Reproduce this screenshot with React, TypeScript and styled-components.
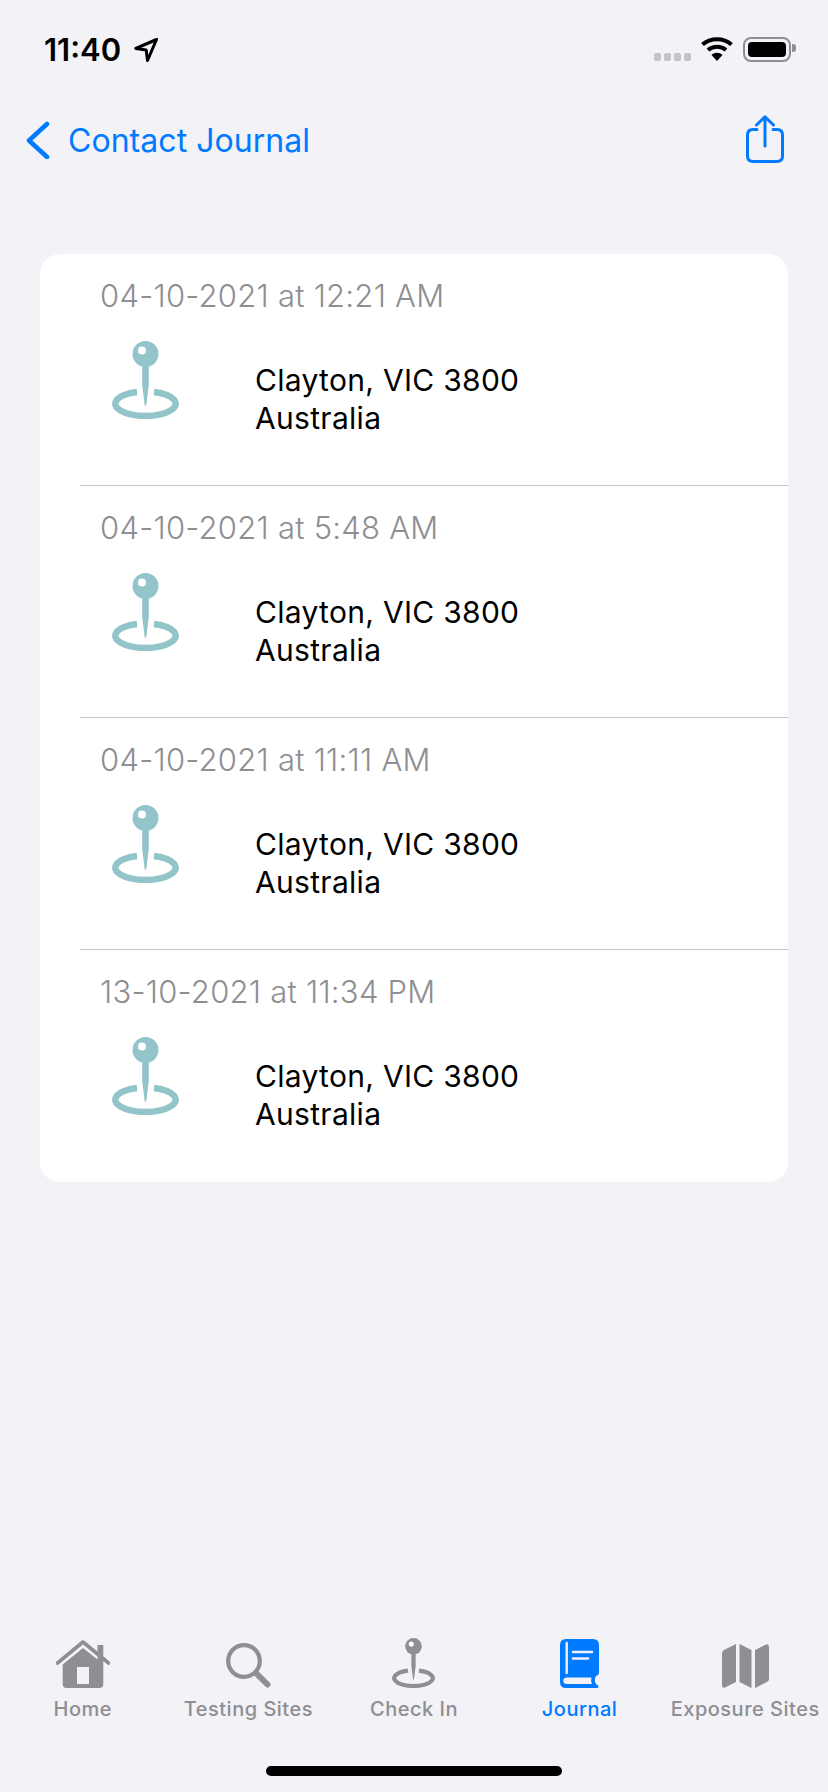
import React from 'react';
import styled, { createGlobalStyle } from 'styled-components';

const BLUE = '#007aff';
const GRAY = '#8e8e93';

const entries = ['04-10-2021 at 12:21 AM', '04-10-2021 at 5:48 AM', '04-10-2021 at 11:11 AM', '13-10-2021 at 11:34 PM'];

function PinIcon({ color, width, height }: { color: string; width: number; height: number }) {
  return (
    <svg width={width} height={height} viewBox="0 0 67 78">
      <circle cx="33.5" cy="13" r="13" fill={color} />
      <circle cx="30" cy="9.5" r="4" fill="#fff" />
      <path d="M30.2 24H36.8V44L34.3 64Q33.5 66 32.7 64L30.2 44Z" fill={color} />
      <path d="M25 51A30.2 12.2 0 1 0 42 51" fill="none" stroke={color} strokeWidth="6.5" />
    </svg>
  );
}

function HomeIcon() {
  return (
    <svg width="54" height="48" viewBox="0 0 54 48">
      <path d="M1.500 23L27 2L52.500 23" fill="none" stroke={GRAY} strokeWidth="3.600" strokeLinecap="round" strokeLinejoin="round" />
      <path
        fillRule="evenodd"
        d="M27 8L41.500 19.500V5H47.300V24.500V44Q47.300 48 43.300 48H10.700Q6.700 48 6.700 44V24.500ZM21 27V44H33V27Z"
        fill={GRAY}
      />
    </svg>
  );
}

function SearchIcon() {
  return (
    <svg width="45" height="45" viewBox="0 0 45 45">
      <circle cx="18" cy="18" r="15.800" fill="none" stroke={GRAY} strokeWidth="4.200" />
      <path d="M30 30L41.500 41.500" stroke={GRAY} strokeWidth="6" strokeLinecap="round" />
    </svg>
  );
}

function BookIcon() {
  return (
    <svg width="39" height="49" viewBox="0 0 39 49">
      <path
        d="M6 0H33Q39 0 39 6V33Q39 36 36 37Q33.500 41 36 45L38.500 47Q39 49 37 49H6Q0 49 0 43V6Q0 0 6 0Z"
        fill={BLUE}
      />
      <path d="M6.700 4V34" stroke="#f2f2f7" strokeWidth="2.400" strokeLinecap="round" />
      <path d="M13 13H32M13 19.500H28" stroke="#f2f2f7" strokeWidth="2.600" strokeLinecap="round" />
      <path d="M7 38.500H31.500Q30.500 41.700 32 45H7Q3.300 45 3.300 41.700Q3.300 38.500 7 38.500Z" fill="#f2f2f7" />
    </svg>
  );
}

function MapIcon() {
  return (
    <svg width="47" height="44" viewBox="0 0 47 44">
      <path d="M0 9Q0 7 2 6L14 0V38L3 43.500Q0 44.500 0 41Z" fill={GRAY} />
      <path d="M17.500 0L29.500 6V44L17.500 38Z" fill={GRAY} />
      <path d="M47 35Q47 37 45 38L33 44V6L44 .5Q47 -.5 47 3Z" fill={GRAY} />
    </svg>
  );
}

const tabs = [
  { label: 'Home', icon: <HomeIcon /> },
  { label: 'Testing Sites', icon: <SearchIcon /> },
  { label: 'Check In', icon: <PinIcon color={GRAY} width={45} height={50} /> },
  { label: 'Journal', icon: <BookIcon />, active: true },
  { label: 'Exposure Sites', icon: <MapIcon /> },
];

export default function App() {
  return (
    <Page>
      <GlobalStyle />
      <StatusBar>
        <Clock>
          <Time>11:40</Time>
          <svg width="24" height="24" viewBox="0 0 24 24">
            <path d="M22.500 1.500L1.800 10.500L12.200 12L13.500 22.500Z" fill="none" stroke="#000" strokeWidth="3" strokeLinejoin="round" />
          </svg>
        </Clock>
        <StatusIcons>
          <Signal>
            <Dot />
            <Dot />
            <Dot />
            <Dot />
          </Signal>
          <svg width="32" height="24" viewBox="0 0 32 24">
            <path d="M1.500 7.500C9.500 .5 22.500 .5 30.500 7.500" fill="none" stroke="#000" strokeWidth="4" />
            <path d="M7 13C12 8.700 20 8.700 25 13" fill="none" stroke="#000" strokeWidth="4" />
            <path d="M10.500 18C13.500 15 18.500 15 21.500 18L16 24Z" fill="#000" />
          </svg>
          <Battery>
            <BatteryFill />
            <BatteryCap />
          </Battery>
        </StatusIcons>
      </StatusBar>

      <NavBar>
        <BackLink>
          <svg width="24" height="38" viewBox="0 0 24 38">
            <path d="M21 3L3 19.500L21 36" fill="none" stroke={BLUE} strokeWidth="4.500" strokeLinecap="round" strokeLinejoin="round" />
          </svg>
          <NavTitle>Contact Journal</NavTitle>
        </BackLink>
        <svg width="38" height="48" viewBox="0 0 38 48">
          <path d="M11 14.500H7Q1.500 14.500 1.500 20V41Q1.500 46.500 7 46.500H31Q36.500 46.500 36.500 41V20Q36.500 14.500 31 14.500H27" fill="none" stroke={BLUE} strokeWidth="3" strokeLinecap="round" />
          <path d="M19 2V31M10.500 10L19 1.800L27.500 10" fill="none" stroke={BLUE} strokeWidth="3" strokeLinecap="round" strokeLinejoin="round" />
        </svg>
      </NavBar>

      <Card>
        {entries.map(date => (
          <Row key={date}>
            <DateLine>{date}</DateLine>
            <RowBody>
              <PinIcon color="#93c4c9" width={67} height={78} />
              <Address>
                Clayton, VIC 3800
                <br />
                Australia
              </Address>
            </RowBody>
          </Row>
        ))}
      </Card>

      <TabBar>
        {tabs.map(tab => (
          <Tab key={tab.label}>
            <TabIcon>{tab.icon}</TabIcon>
            <TabLabel $active={tab.active}>{tab.label}</TabLabel>
          </Tab>
        ))}
      </TabBar>
      <HomeIndicator />
    </Page>
  );
}

const GlobalStyle = createGlobalStyle`
  html, body {
    margin: 0;
    padding: 0;
    background: #f2f2f7;
  }
  * {
    box-sizing: border-box;
  }
`;

const Page = styled.div`
  width: 828px;
  height: 1792px;
  display: flex;
  flex-direction: column;
  overflow: hidden;
  background: #f2f2f7;
  font-family: 'Inter', 'Liberation Sans', sans-serif;
`;

const StatusBar = styled.div`
  height: 100px;
  padding: 37px 34px 0 44px;
  display: flex;
  justify-content: space-between;
  align-items: flex-start;
`;

const Clock = styled.div`
  display: flex;
  align-items: center;
  gap: 13px;
  height: 25px;
`;

const Time = styled.span`
  font-size: 31px;
  font-weight: 600;
  color: #000;
`;

const StatusIcons = styled.div`
  display: flex;
  align-items: flex-start;
`;

const Signal = styled.div`
  display: flex;
  gap: 3px;
  margin: 16px 10px 0 0;
`;

const Dot = styled.span`
  width: 7px;
  height: 8px;
  border-radius: 2px;
  background: #c4c4c8;
`;

const Battery = styled.div`
  position: relative;
  width: 48px;
  height: 25px;
  margin: 0 3px 0 10px;
  padding: 3px;
  border: 2px solid #8e8e93;
  border-radius: 8px;
`;

const BatteryFill = styled.div`
  height: 100%;
  border-radius: 4px;
  background: #000;
`;

const BatteryCap = styled.div`
  position: absolute;
  right: -7px;
  top: 5px;
  width: 4px;
  height: 8px;
  border-radius: 0 3px 3px 0;
  background: #8e8e93;
`;

const NavBar = styled.div`
  height: 64px;
  margin-top: 15px;
  padding: 0 44px 0 26px;
  display: flex;
  justify-content: space-between;
  align-items: flex-start;
`;

const BackLink = styled.div`
  display: flex;
  align-items: center;
  gap: 18px;
  height: 50px;
`;

const NavTitle = styled.span`
  font-size: 32px;
  font-weight: 400;
  letter-spacing: 0.05px;
  color: ${BLUE};
`;

const Card = styled.div`
  width: 748px;
  margin: 75px 0 0 40px;
  border-radius: 20px;
  background: #fff;
  overflow: hidden;
`;

const Row = styled.div`
  height: 232px;
  margin-left: 40px;
  padding-top: 24px;
  border-bottom: 1px solid #c6c6c8;

  &:last-child {
    border-bottom: 0;
  }
`;

const DateLine = styled.div`
  height: 36px;
  padding-left: 20px;
  font-size: 31px;
  font-weight: 300;
  line-height: 36px;
  letter-spacing: 0.25px;
  color: ${GRAY};
`;

const RowBody = styled.div`
  display: flex;
  align-items: flex-start;
  margin-top: 27px;
  padding-left: 32px;
`;

const Address = styled.div`
  margin: 20px 0 0 76px;
  font-size: 30px;
  line-height: 38px;
  letter-spacing: 0.3px;
  color: #000;
`;

const TabBar = styled.div`
  margin-top: auto;
  display: grid;
  grid-template-columns: repeat(5, 1fr);
`;

const Tab = styled.div`
  display: flex;
  flex-direction: column;
  align-items: center;
`;

const TabIcon = styled.div`
  height: 50px;
  display: flex;
  align-items: flex-end;
`;

const TabLabel = styled.span<{ $active?: boolean }>`
  margin-top: 9px;
  font-size: 20px;
  font-weight: 450;
  line-height: 24px;
  letter-spacing: 0.5px;
  white-space: nowrap;
  color: ${props => (props.$active ? BLUE : GRAY)};
`;

const HomeIndicator = styled.div`
  width: 296px;
  height: 10px;
  margin: 45px auto 16px;
  border-radius: 5px;
  background: #000;
`;
